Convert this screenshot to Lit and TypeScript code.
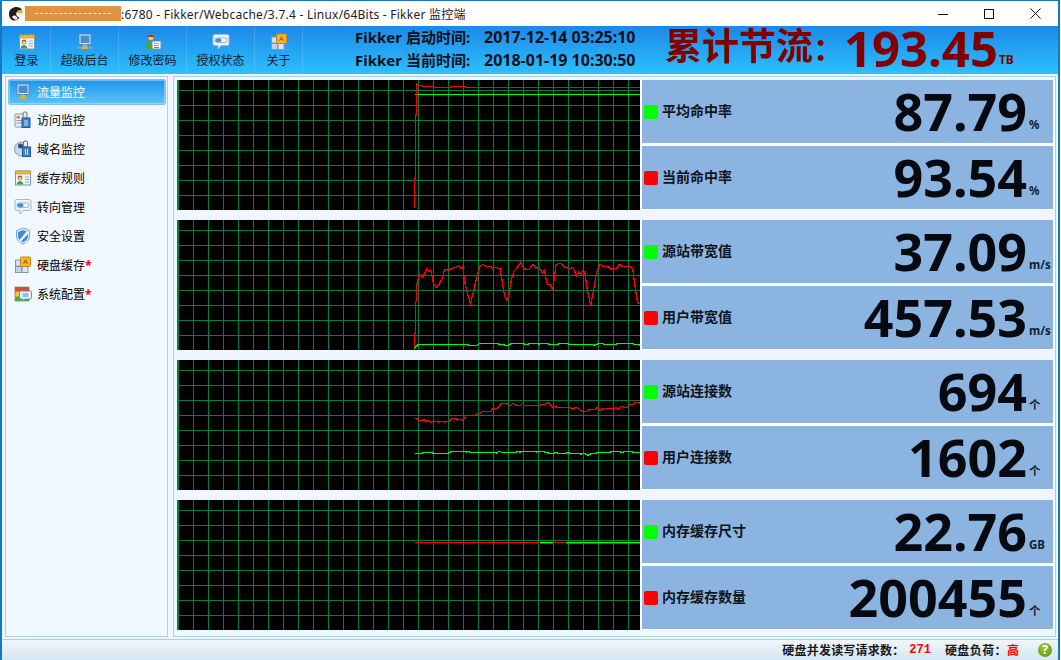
import { LitElement, html, css, svg } from "lit";
import { customElement } from "lit/decorators.js";

type P = number[];
const pts = (a: P, ox: number, oy: number, sx = 3, sy = 3) => {
  const out: string[] = [];
  for (let i = 0; i < a.length; i += 2) out.push(`${(400 + a[i] / sx - 177).toFixed(1)},${(oy + a[i + 1] / sy).toFixed(1)}`);
  return out.join(" ");
};

const c1r = [43,400,43,310,46,310,46,120,49,120,49,26,52,31,66,31,68,34,100,34,102,37,152,37,154,34,196,34,198,37,720,37];
const c1g = [45,58,720,58];
const c2r = [43,370,43,325,46,325,46,230,50,228,50,178,55,160,60,148,68,157,80,133,85,138,92,136,100,175,108,188,116,180,127,160,133,135,140,133,147,138,153,130,168,128,176,121,182,130,188,124,196,180,203,208,211,236,222,195,230,155,240,125,248,118,258,124,272,124,278,132,284,127,300,131,306,165,314,215,320,224,326,215,334,165,342,138,350,130,362,112,372,132,386,133,400,118,408,130,416,127,428,145,433,136,442,178,450,178,458,195,468,120,480,114,494,126,510,132,518,127,530,153,536,142,542,148,548,138,554,140,562,195,572,242,580,200,590,140,600,118,610,124,625,125,632,132,650,130,658,118,668,125,690,125,698,133,706,190,712,230,718,238];
const c2g = [43,372,50,362,56,358,204,358,206,361,230,361,234,358,244,355,294,355,296,358,312,358,314,361,326,361,328,358,340,355,372,355,374,358,386,358,388,355,414,355,416,358,424,355,444,355,446,358,476,358,478,355,504,355,506,358,576,358,580,361,590,358,598,355,610,355,612,358,650,358,652,355,700,355,702,358,716,358,720,361];
const c3r = [45,115,50,115,55,121,70,121,72,118,78,124,85,121,92,127,96,124,112,124,116,127,118,124,132,124,134,127,136,124,148,124,152,118,160,115,168,115,172,120,178,118,188,121,200,106,225,106,228,103,240,100,250,94,272,94,280,85,292,85,298,79,304,70,320,70,326,76,332,76,338,70,348,76,362,76,368,70,372,76,422,76,424,73,435,73,444,67,450,73,458,82,465,79,472,82,508,82,518,87,526,82,534,85,545,94,560,94,568,88,586,88,592,82,600,91,606,85,612,88,622,85,634,85,640,88,648,82,654,88,662,79,672,82,682,82,690,73,700,73,706,67,714,67,720,70];
const c3g = [45,220,68,220,70,217,96,217,98,220,146,220,148,217,158,214,196,214,199,217,202,214,210,217,288,217,290,220,296,214,306,217,350,217,352,214,362,217,364,214,408,214,410,217,412,214,432,214,434,217,444,217,446,220,464,220,466,217,474,220,500,220,502,217,510,220,540,220,542,223,550,220,558,223,565,226,570,223,578,220,590,220,592,217,632,217,634,214,660,214,662,217,690,214,702,217,720,217];

const vLines = Array.from({ length: 31 }, (_, i) => i * 15 + 1.5);
const hLines = Array.from({ length: 8 }, (_, i) => i * 15 + 10.5);

interface Series { g: string[]; r: string[]; }
const series: Series[] = [
  { r: [pts(c1r, 0, -5)], g: [pts(c1g, 0, -5)] },
  { r: [pts(c2r, 0, 5)], g: [pts(c2g, 0, 5)] },
  { r: [pts(c3r, 0, 20)], g: [pts(c3g, 0, 20)] },
  {
    r: [pts([45,127,418,127], 0, 0), pts([420,130,458,130], 0, 0), pts([460,127,496,127], 0, 0), pts([498,130,720,130], 0, 0)],
    g: [pts([420,127,458,127], 0, 0), pts([498,127,720,127], 0, 0)],
  },
];

const chart = (s: Series) => html`<svg class="chart" width="463" height="130" viewBox="0 0 463 130" shape-rendering="crispEdges">
  <rect width="463" height="130" fill="#000"></rect>
  <line x1="1" x2="1" y1="0" y2="130" stroke="#008040" stroke-width="2"></line>
  ${vLines.map((x) => svg`<line x1=${x} x2=${x} y1="0" y2="130" stroke="#008040" stroke-width="1"></line>`)}
  ${hLines.map((y) => svg`<line x1="0" x2="463" y1=${y} y2=${y} stroke="#008040" stroke-width="1"></line>`)}
  ${s.g.map((p) => svg`<polyline points=${p} fill="none" stroke="#00ff00" stroke-width="1.2"></polyline>`)}
  ${s.r.map((p) => svg`<polyline points=${p} fill="none" stroke="#ff0000" stroke-width="1.2"></polyline>`)}
</svg>`;

const icMonitor = html`<svg width="18" height="18" viewBox="0 0 18 18"><rect x="3" y="1" width="12" height="10.5" rx="1" fill="#dfe9f5" stroke="#5d7fa8"></rect><rect x="4.5" y="2.5" width="9" height="7.5" fill="#3e8fdc"></rect><rect x="7" y="11.5" width="4" height="2" fill="#9db4cc"></rect><rect x="1" y="14" width="16" height="1.6" fill="#8aa3bf"></rect><rect x="6" y="13.5" width="6" height="2.5" fill="#f2b01e"></rect></svg>`;
const icCard = html`<svg width="18" height="18" viewBox="0 0 18 18"><rect x="1.5" y="2" width="15" height="14" fill="#f3f7fc" stroke="#7b97bb"></rect><rect x="1.5" y="2" width="15" height="3" fill="#f5b53a" stroke="#c98a1c" stroke-width=".6"></rect><circle cx="6" cy="9" r="2.4" fill="#a85a2a"></circle><circle cx="6" cy="9.5" r="1.6" fill="#f6cfae"></circle><path d="M2.6 15.4c.4-2.6 1.8-3.3 3.4-3.3s3 .7 3.4 3.3z" fill="#3fa34d"></path><path d="M11 8h4M11 10.5h4M11 13h4" stroke="#8fa9c9"></path></svg>`;
const icUser = html`<svg width="18" height="18" viewBox="0 0 18 18"><circle cx="7" cy="4.5" r="3.2" fill="#f0c49a" stroke="#9b5a25" stroke-width=".7"></circle><path d="M3.8 4.2c.3-3 6-3.4 6.4 0-2 .2-4.4-.5-6.4 0z" fill="#8c4a1a"></path><path d="M1 16c.2-5 2.5-7.6 6-7.6 2 0 3.500 .8 4.500 2.500V16z" fill="#4aa53c"></path><rect x="8" y="8" width="9" height="8" fill="#fff" stroke="#6b8db5"></rect><path d="M10 10.500h5M10 12.500h5" stroke="#e8a020"></path><path d="M10 14.500h5" stroke="#4aa53c"></path></svg>`;
const icSpeech = html`<svg width="18" height="18" viewBox="0 0 18 18"><path d="M2.500 1.500h13a1.500 1.500 0 0 1 1.500 1.500v8a1.500 1.500 0 0 1-1.500 1.500H9l-3 3.500v-3.500H2.500A1.500 1.500 0 0 1 1 11V3a1.500 1.500 0 0 1 1.500-1.500z" fill="#eef4fb" stroke="#9fb8d6"></path><rect x="3" y="5" width="12" height="4.500" rx="2.200" fill="#fff" stroke="#6c93c2" stroke-width=".7"></rect><rect x="3.500" y="5.500" width="6" height="3.500" rx="1.700" fill="#3e8fdc"></rect></svg>`;
const icGrid = html`<svg width="18" height="18" viewBox="0 0 18 18"><rect x="1.500" y="4" width="6" height="6" fill="#dbe5f1" stroke="#7e94b3"></rect><rect x="1.500" y="10.500" width="6" height="6" fill="#c4d2e4" stroke="#7e94b3"></rect><rect x="8" y="10.500" width="6" height="6" fill="#dbe5f1" stroke="#7e94b3"></rect><rect x="6.500" y="1" width="10" height="9.500" rx="1" fill="#f7b52c" stroke="#c98518"></rect><path d="M9.500 8l2-4.500 2 4.500M10.200 6.500h2.600" fill="none" stroke="#a8630f"></path></svg>`;
const icLock = html`<svg width="18" height="18" viewBox="0 0 18 18"><rect x="1" y="3" width="11" height="13" rx="1" fill="#e8f0f9" stroke="#7c9bc2"></rect><rect x="2.500" y="5" width="3.500" height="2.500" fill="#ef7f2b"></rect><path d="M2.500 9.500h8M2.500 12h8" stroke="#7c9bc2"></path><rect x="9" y="1" width="4" height="6" rx="1.500" fill="#eee" stroke="#666"></rect><rect x="8" y="7" width="8" height="9.500" fill="#3f7fc9" stroke="#1f5a9f"></rect><path d="M11 9v6M13 9v6" stroke="#cfe2f6"></path></svg>`;
const icDisk = html`<svg width="18" height="18" viewBox="0 0 18 18"><circle cx="7.500" cy="9" r="7" fill="#c8d9ec" stroke="#7c9bc2"></circle><circle cx="6.500" cy="6" r="2.500" fill="#2f4c73"></circle><rect x="9.500" y="1" width="4" height="6" rx="1.500" fill="#eee" stroke="#666"></rect><rect x="8.500" y="7" width="8" height="9.500" fill="#3f7fc9" stroke="#1f5a9f"></rect><path d="M11.500 9v6M13.500 9v6" stroke="#cfe2f6"></path></svg>`;
const icShield = html`<svg width="18" height="18" viewBox="0 0 18 18"><path d="M9 1l6.500 2.500v5.500c0 4-3 6.500-6.500 8-3.500-1.500-6.500-4-6.500-8V3.500z" fill="#e6eff9" stroke="#7fa3cf"></path><path d="M9 3l5 2v4c0 3-2.300 5-5 6.200-2.700-1.200-5-3.200-5-6.200V5z" fill="#3d8ae0"></path><path d="M12.500 4.500l1.500.6v2L7 14.500l-1.700-1.200z" fill="#f2f7fd"></path></svg>`;
const icConfig = html`<svg width="18" height="18" viewBox="0 0 18 18"><rect x="1" y="2" width="14" height="14" fill="#f5c33b" stroke="#8a6a20" stroke-width=".6"></rect><rect x="1" y="2" width="14" height="4.500" fill="#dd4b30"></rect><rect x="1" y="11.500" width="14" height="4.500" fill="#58a83e"></rect><path d="M7 6h9a1.500 1.500 0 0 1 1.500 1.500v5a1.500 1.500 0 0 1-1.500 1.500h-5l-2 2v-2H7a1.500 1.500 0 0 1-1.500-1.500v-5A1.500 1.500 0 0 1 7 6z" fill="#eaf3fc" stroke="#5f90c6"></path><path d="M8.500 9h6M8.500 11h6" stroke="#4d86c4"></path></svg>`;
const logo = html`<svg width="16" height="16" viewBox="0 0 16 16"><path d="M1 8C1 3 5 1 8.500 1c2.500 0 4.500 1 5.500 3l-4 1.500c-2 .7-2.500 3-1 4.500l2.500 2c-1.500 1.700-3.500 2.500-5.500 2.500C3.500 14.500 1 12 1 8z" fill="#1d1d1d"></path><path d="M9 4.500l5-.7 1 2.700-4 1.200z" fill="#f0a81e"></path><path d="M4 11c1-1.500 3-2 4.500-.5l1.500 2.500c-1.500 1-4 1-6-2z" fill="#f6f1e6"></path></svg>`;

const tools = [
  { icon: icCard, label: "登录", w: 48 },
  { icon: icMonitor, label: "超级后台", w: 68 },
  { icon: icUser, label: "修改密码", w: 68 },
  { icon: icSpeech, label: "授权状态", w: 68 },
  { icon: icGrid, label: "关于", w: 48 },
];
const menu = [
  { icon: icMonitor, label: "流量监控", active: true },
  { icon: icLock, label: "访问监控" },
  { icon: icDisk, label: "域名监控" },
  { icon: icCard, label: "缓存规则" },
  { icon: icSpeech, label: "转向管理" },
  { icon: icShield, label: "安全设置" },
  { icon: icGrid, label: "硬盘缓存", star: true },
  { icon: icConfig, label: "系统配置", star: true },
];
const rows = [
  [["平均命中率", "87.79", "%"], ["当前命中率", "93.54", "%"]],
  [["源站带宽值", "37.09", "m/s"], ["用户带宽值", "457.53", "m/s"]],
  [["源站连接数", "694", "个"], ["用户连接数", "1602", "个"]],
  [["内存缓存尺寸", "22.76", "GB"], ["内存缓存数量", "200455", "个"]],
];

@customElement("app-root")
export class AppRoot extends LitElement {
  static styles = css`
    :host { display: block; width: 1061px; height: 660px; overflow: hidden; background: #fff; font-family: "Noto Sans", "Noto Sans CJK SC", sans-serif; color: #000; }
    .win { width: 1060px; height: 660px; box-sizing: border-box; border: 2px solid #1679c0; border-width: 1px 2px 0; display: flex; flex-direction: column; background: #edf5fd; }
    .title { height: 25px; flex: none; background: #fff; display: flex; align-items: center; font-size: 12px; color: #222; padding-left: 6px; }
    .logo { width: 16px; height: 16px; margin-right: 1px; }
    .redact { width: 96px; height: 15px; background: #dd9342; display: flex; align-items: center; justify-content: center; }
    .redact i { width: 76px; border-top: 1px dashed #eee; }
    .ttext { letter-spacing: .24px; }
    .winbtns { margin-left: auto; display: flex; }
    .winbtns div { width: 46px; height: 25px; display: flex; align-items: center; justify-content: center; }
    .toolbar { height: 48px; flex: none; background: linear-gradient(#1d88e6, #2cc0ff); display: flex; align-items: stretch; }
    .tools { display: flex; padding-left: 1px; width: 352px; box-sizing: border-box; }
    .tool { display: flex; flex-direction: column; align-items: center; font-size: 12px; line-height: 16px; padding-top: 7px; box-sizing: border-box; border-right: 1px solid rgba(255,255,255,.14); color: #10202c; }
    .tool svg { display: block; height: 18px; margin-bottom: 2px; }
    .times { width: 310px; flex: none; font-size: 16px; font-weight: 700; display: flex; flex-direction: column; line-height: 23px; color: #0b1017; margin-left: 1px; white-space: nowrap; }
    .times div { display: flex; }
    .times span { width: 129px; flex: none; font-size: 15px; }
    .saved { display: flex; align-items: center; color: #800000; font-weight: 700; white-space: nowrap; height: 48px; }
    .saved .a { font-size: 37px; line-height: 42px; width: 179px; margin-top: -6px; }
    .saved .a i { font-style: normal; font-size: 31px; }
    .saved .b { font-size: 49px; line-height: 42px; margin-top: -4px; }
    .saved .c { font-size: 12px; margin-left: 1px; margin-top: 20px; line-height: 14px; }
    .body { flex: 1; display: flex; min-height: 0; padding: 2px 2px 2px 3px; gap: 5px; }
    .side { width: 163px; box-sizing: border-box; background: #f2f8ff; border: 1px solid #a9d2ea; padding: 2px 1px 2px 2px; flex: none; }
    .item { height: 29px; display: flex; align-items: center; gap: 5px; padding-left: 6px; font-size: 12px; color: #000; box-sizing: border-box; }
    .item.active { height: 26px; color: #fff; border: 1px solid #7fc4ee; border-radius: 2px; background: linear-gradient(#1e96ec, #5cc2f8); box-shadow: inset 0 0 0 1px rgba(255,255,255,.35); padding-left: 5px; }
    .item b { color: #f00; font-weight: 700; }
    .main { flex: 1; background: #eff6ff; border: 1px solid #a9d2ea; box-sizing: border-box; padding: 3px 0 0 3px; display: flex; flex-direction: column; gap: 10px; }
    .row { height: 130px; display: flex; flex: none; background: #fff; }
    .chart { display: block; flex: none; }
    .stats { flex: 1; margin-left: 2px; margin-right: 2px; display: flex; flex-direction: column; gap: 3px; padding-bottom: 1px; }
    .stat { height: 63px; background: #8cb4e1; display: flex; align-items: center; padding-left: 2px; }
    .sw { width: 14px; height: 14px; border-radius: 2px; margin-right: 4px; flex: none; }
    .label { font-size: 14px; font-weight: 700; color: #0d1420; margin-bottom: 4px; }
    .val { margin-left: auto; margin-bottom: 2px; font-size: 52px; font-weight: 700; line-height: 61px; color: #060a10; display: flex; align-items: baseline; }
    .unit { font-size: 11.5px; font-weight: 700; width: 24px; margin-left: 2px; line-height: 10px; color: #12202f; position: relative; top: -2px; }
    .status { height: 21px; flex: none; background: linear-gradient(#f0f6fb, #d4e5f2); border-top: 1px solid #c0c8d0; display: flex; align-items: center; justify-content: flex-end; font-size: 12px; font-weight: 700; color: #1a1a1a; padding-right: 6px; box-sizing: border-box; letter-spacing: .2px; }
    .status em { font-style: normal; color: #f00; }
    .high { letter-spacing: 1px; }
    .num { font-family: "Liberation Mono", monospace; font-size: 12px; margin-left: 5px; margin-right: 14px; letter-spacing: 0; }
    .load { letter-spacing: .4px; }
    .gap { width: 18px; }
    .help { width: 14px; height: 14px; border-radius: 50%; background: radial-gradient(circle at 40% 30%, #9ccb2c, #5b8f10); color: #fff; font-size: 12px; font-weight: 700; display: flex; align-items: center; justify-content: center; line-height: 1; letter-spacing: 0; }
  `;

  render() {
    return html`<div class="win">
      <div class="title">
        <div class="logo">${logo}</div>
        <div class="redact"><i></i></div>
        <span class="ttext">:6780 - Fikker/Webcache/3.7.4 - Linux/64Bits - Fikker 监控端</span>
        <div class="winbtns">
          <div><svg width="10" height="10"><path d="M0 5.500h10" stroke="#111"></path></svg></div>
          <div><svg width="10" height="10"><rect x=".5" y=".5" width="9" height="9" fill="none" stroke="#111"></rect></svg></div>
          <div><svg width="11" height="11"><path d="M.5.500l10 10M10.500.500l-10 10" stroke="#111"></path></svg></div>
        </div>
      </div>
      <div class="toolbar">
        <div class="tools">
          ${tools.map((t) => html`<div class="tool" style="width:${t.w}px">${t.icon}<span>${t.label}</span></div>`)}
        </div>
        <div class="times">
          <div><span>Fikker 启动时间:</span>2017-12-14 03:25:10</div>
          <div><span>Fikker 当前时间:</span>2018-01-19 10:30:50</div>
        </div>
        <div class="saved"><span class="a">累计节流<i>${"\uFF1A"}</i></span><span class="b">193.45</span><span class="c">TB</span></div>
      </div>
      <div class="body">
        <div class="side">
          ${menu.map((m) => html`<div class="item ${m.active ? "active" : ""}">${m.icon}<span>${m.label}${m.star ? html`<b>*</b>` : ""}</span></div>`)}
        </div>
        <div class="main">
          ${rows.map((r, i) => html`<div class="row">
            ${chart(series[i])}
            <div class="stats">
              ${r.map((s, j) => html`<div class="stat">
                <span class="sw" style="background:${j === 0 ? "#00ff00" : "#ff0000"}"></span>
                <span class="label">${s[0]}</span>
                <span class="val">${s[1]}<span class="unit">${s[2]}</span></span>
              </div>`)}
            </div>
          </div>`)}
        </div>
      </div>
      <div class="status">
        <span>硬盘并发读写请求数${"\uFF1A"}</span><em class="num">271</em>
        <span class="load">硬盘负荷${"\uFF1A"}</span><em class="high">高</em><span class="gap"></span>
        <span class="help">?</span>
      </div>
    </div>`;
  }
}
